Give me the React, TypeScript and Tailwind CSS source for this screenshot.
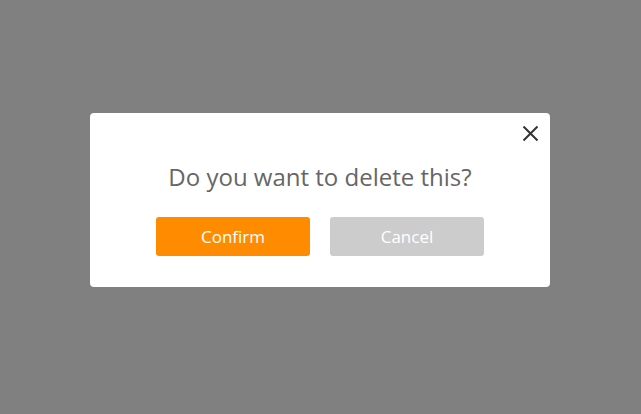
import React from "react";

export default function App() {
  return (
    <div
      className="w-[641px] h-[414px] bg-[#808080] flex pl-[90px] pt-[113px]"
      style={{ fontFamily: '"Open Sans", sans-serif' }}
    >
      <div className="relative w-[460px] h-[174px] bg-white rounded-[4px] flex flex-col items-center pt-[48px]">
        <svg
          className="absolute top-[12px] right-[11px]"
          width="17"
          height="17"
          viewBox="0 0 17 17"
          fill="none"
          stroke="#333333"
          strokeWidth="2"
        >
          <path d="M1.5 1.5 L15.5 15.5 M15.5 1.5 L1.5 15.5" />
        </svg>
        <div className="text-[24px] leading-[32px] text-[#666666]">Do you want to delete this?</div>
        <div className="flex gap-[20px] mt-[24px]">
          <button className="w-[154px] h-[39px] rounded-[3px] bg-[#ff8c00] text-white text-[17px]">
            Confirm
          </button>
          <button className="w-[154px] h-[39px] rounded-[3px] bg-[#cccccc] text-white text-[17px]">
            Cancel
          </button>
        </div>
      </div>
    </div>
  );
}
